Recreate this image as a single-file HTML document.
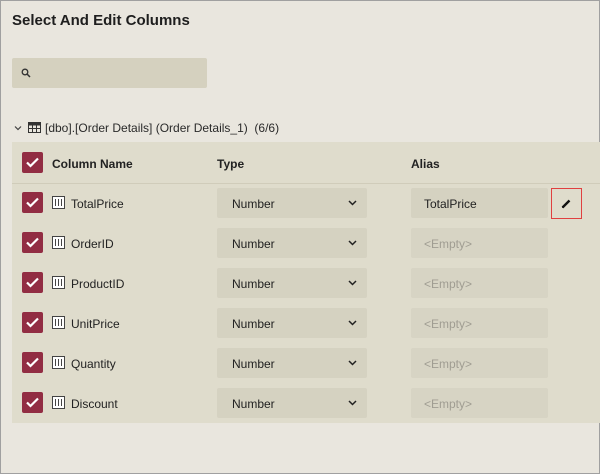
<!DOCTYPE html>
<html><head><style>
*{box-sizing:border-box;margin:0;padding:0}
body{width:600px;height:474px;background:#e9e6de;font-family:"Segoe UI","Liberation Sans",sans-serif;color:#222;position:relative;overflow:hidden}
.frame{position:absolute;left:0;top:0;width:600px;height:474px;border:1px solid #a0a0a0}
.title{position:absolute;left:12px;top:12px;font-size:15px;font-weight:bold;color:#1e1e1e}
.search{position:absolute;left:12px;top:58px;width:195px;height:30px;background:#d5d1bf;border-radius:2px}
.tree{position:absolute;left:14px;top:121px;font-size:12px;color:#2a2a2a}
.panel{position:absolute;left:12px;top:142px;width:588px;height:281px;background:#dfdccc}
.hline{position:absolute;left:12px;top:183px;width:588px;height:1px;background:#d0ccba}
.cb{position:absolute;left:22px;width:21px;height:21px;background:#922d43;border-radius:2px}
.cb svg{position:absolute;left:3px;top:4px}
.h{position:absolute;top:157px;font-size:12px;font-weight:bold;color:#222}
.gi{position:absolute;left:52px;width:13px;height:13px;border:1px solid #444;background:#fff}
.gi i{position:absolute;left:2px;top:2px;width:7px;height:7px;background:repeating-linear-gradient(90deg,#444 0 1px,transparent 1px 3px),transparent;}
.name{position:absolute;left:71px;font-size:12px;color:#222;margin-top:2px}
.sel{position:absolute;left:217px;width:150px;height:30px;background:#d5d2c1;border-radius:2px;font-size:12px;padding:9px 0 0 15px}
.sel svg{position:absolute;right:10px;top:12px}
.al{position:absolute;left:411px;width:137px;height:30px;background:#d5d2c1;border-radius:2px;font-size:12px;padding:9px 0 0 13px;color:#222}
.al.e{color:#a09d92;background:#d7d4c4}
.edit{position:absolute;left:551px;top:188px;width:31px;height:31px;border:1.5px solid #e04040}
</style></head><body>
<div class="frame"></div>
<div class="title">Select And Edit Columns</div>
<div class="search"><svg style="position:absolute;left:9px;top:10px" width="10" height="10" viewBox="0 0 10 10"><circle cx="4" cy="4" r="2.8" fill="none" stroke="#333" stroke-width="1.3"/><path d="M6 6L9 9" stroke="#333" stroke-width="1.5"/></svg></div>
<div class="tree"><svg width="8" height="6" style="margin-right:6px;vertical-align:1px" viewBox="0 0 8 6"><path d="M1 1.5L4 4.5 7 1.5" fill="none" stroke="#444" stroke-width="1.2"/></svg><svg width="13" height="11" style="vertical-align:-1px;margin-right:4px" viewBox="0 0 13 11"><rect x="0.5" y="0.5" width="12" height="10" fill="none" stroke="#333"/><rect x="0.5" y="0.5" width="12" height="3" fill="#333"/><path d="M4.5 3v8M8.5 3v8M0 6.5h13" stroke="#333"/></svg>[dbo].[Order Details] (Order Details_1) &nbsp;(6/6)</div>
<div class="panel"></div>
<div class="hline"></div>
<div class="cb" style="top:152px"><svg width="15" height="13" viewBox="0 0 15 13"><path d="M2 6.5L5.5 10 13 2.5" fill="none" stroke="#fff" stroke-width="2.2"/></svg></div>
<div class="h" style="left:52px">Column Name</div>
<div class="h" style="left:217px">Type</div>
<div class="h" style="left:411px">Alias</div>

<div class="cb" style="top:192px"><svg width="15" height="13" viewBox="0 0 15 13"><path d="M2 6.5L5.5 10 13 2.5" fill="none" stroke="#fff" stroke-width="2.2"/></svg></div><div class="gi" style="top:196px"><i></i></div><div class="name" style="top:195px">TotalPrice</div><div class="sel" style="top:188px">Number<svg width="9" height="6" viewBox="0 0 9 6"><path d="M1 1l3.5 3.5L8 1" fill="none" stroke="#222" stroke-width="1.5"/></svg></div><div class="al" style="top:188px">TotalPrice</div>
<div class="edit"><svg style="position:absolute;left:9px;top:9px" width="11" height="11" viewBox="0 0 11 11"><path d="M1.5 9.5L8.5 2.5" stroke="#111" stroke-width="2.4"/><path d="M1 10l0.5-2 1.5 1.5z" fill="#111"/></svg></div>

<div class="cb" style="top:232px"><svg width="15" height="13" viewBox="0 0 15 13"><path d="M2 6.5L5.5 10 13 2.5" fill="none" stroke="#fff" stroke-width="2.2"/></svg></div><div class="gi" style="top:236px"><i></i></div><div class="name" style="top:235px">OrderID</div><div class="sel" style="top:228px">Number<svg width="9" height="6" viewBox="0 0 9 6"><path d="M1 1l3.5 3.5L8 1" fill="none" stroke="#222" stroke-width="1.5"/></svg></div><div class="al e" style="top:228px">&lt;Empty&gt;</div>

<div class="cb" style="top:272px"><svg width="15" height="13" viewBox="0 0 15 13"><path d="M2 6.5L5.5 10 13 2.5" fill="none" stroke="#fff" stroke-width="2.2"/></svg></div><div class="gi" style="top:276px"><i></i></div><div class="name" style="top:275px">ProductID</div><div class="sel" style="top:268px">Number<svg width="9" height="6" viewBox="0 0 9 6"><path d="M1 1l3.5 3.5L8 1" fill="none" stroke="#222" stroke-width="1.5"/></svg></div><div class="al e" style="top:268px">&lt;Empty&gt;</div>

<div class="cb" style="top:312px"><svg width="15" height="13" viewBox="0 0 15 13"><path d="M2 6.5L5.5 10 13 2.5" fill="none" stroke="#fff" stroke-width="2.2"/></svg></div><div class="gi" style="top:316px"><i></i></div><div class="name" style="top:315px">UnitPrice</div><div class="sel" style="top:308px">Number<svg width="9" height="6" viewBox="0 0 9 6"><path d="M1 1l3.5 3.5L8 1" fill="none" stroke="#222" stroke-width="1.5"/></svg></div><div class="al e" style="top:308px">&lt;Empty&gt;</div>

<div class="cb" style="top:352px"><svg width="15" height="13" viewBox="0 0 15 13"><path d="M2 6.5L5.5 10 13 2.5" fill="none" stroke="#fff" stroke-width="2.2"/></svg></div><div class="gi" style="top:356px"><i></i></div><div class="name" style="top:355px">Quantity</div><div class="sel" style="top:348px">Number<svg width="9" height="6" viewBox="0 0 9 6"><path d="M1 1l3.5 3.5L8 1" fill="none" stroke="#222" stroke-width="1.5"/></svg></div><div class="al e" style="top:348px">&lt;Empty&gt;</div>

<div class="cb" style="top:392px"><svg width="15" height="13" viewBox="0 0 15 13"><path d="M2 6.5L5.5 10 13 2.5" fill="none" stroke="#fff" stroke-width="2.2"/></svg></div><div class="gi" style="top:396px"><i></i></div><div class="name" style="top:395px">Discount</div><div class="sel" style="top:388px">Number<svg width="9" height="6" viewBox="0 0 9 6"><path d="M1 1l3.5 3.5L8 1" fill="none" stroke="#222" stroke-width="1.5"/></svg></div><div class="al e" style="top:388px">&lt;Empty&gt;</div>
</body></html>
